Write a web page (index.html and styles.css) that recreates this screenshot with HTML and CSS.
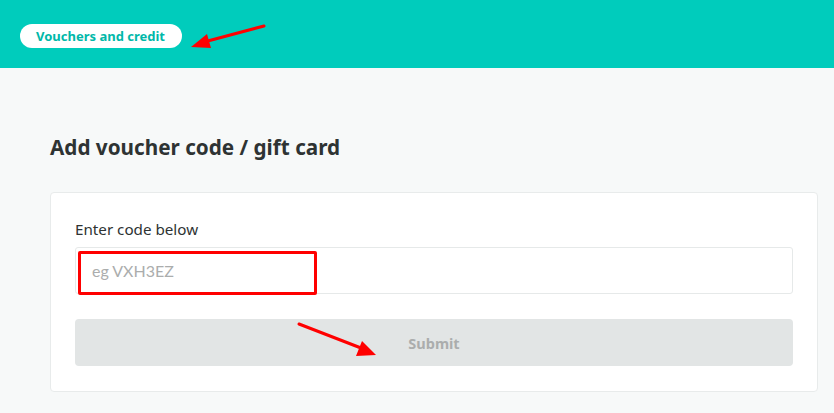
FILE: index.html
```html
<!DOCTYPE html>
<html lang="en">
<head>
    <meta charset="UTF-8">
    <meta name="viewport" content="width=device-width, initial-scale=1.0">
    <title>Vouchers and credit</title>
    <link rel="stylesheet" href="styles.css">
</head>
<body>
<header class="topbar">
    <span class="pill">Vouchers and credit</span>
    <!-- annotation arrow -->
    <svg class="arrow arrow-top" width="90" height="40" viewBox="0 0 90 40">
        <line x1="84" y1="6" x2="24" y2="22" stroke="#f00" stroke-width="3" stroke-linecap="round"/>
        <polygon points="11,27 27,14 31,28" fill="#f00"/>
    </svg>
</header>
<main class="content">
    <h1>Add voucher code / gift card</h1>
    <section class="card">
        <label for="code" class="field-label">Enter code below</label>
        <div class="input-wrap">
            <input type="text" id="code" placeholder="eg VXH3EZ">
            <span class="highlight"></span>
        </div>
        <div class="btn-wrap">
            <button type="button" class="submit-btn" disabled>Submit</button>
            <svg class="arrow arrow-btn" width="90" height="40" viewBox="0 0 90 40">
                <line x1="4" y1="4" x2="66" y2="28" stroke="#f00" stroke-width="3" stroke-linecap="round"/>
                <polygon points="81,35 61,36 67,21" fill="#f00"/>
            </svg>
        </div>
    </section>
</main>
</body>
</html>
```

FILE: styles.css
```css
body {
    margin: 0;
    font-family: 'Noto Sans', 'Open Sans', sans-serif;
    background-color: #f7f9f9;
    color: #2e3333;
}
.topbar {
    position: relative;
    height: 68px;
    background-color: #00ccbc;
    padding: 24px 0 0 20px;
    box-sizing: border-box;
}
.pill {
    display: inline-block;
    background: #fff;
    color: #00b8a9;
    font-size: 13px;
    font-weight: bold;
    line-height: 24px;
    height: 24px;
    padding: 0 17px 0 16px;
    border-radius: 12px;
}
.arrow {
    position: absolute;
    pointer-events: none;
}
.arrow-top {
    left: 180px;
    top: 20px;
}
.content {
    padding: 0 16px 0 50px;
}
h1 {
    margin: 0;
    padding: 64px 0 30px;
    font-size: 20.7px;
    line-height: 30px;
    font-weight: bold;
    color: #2e3333;
}
.card {
    background: #fff;
    border: 1px solid #e8ebeb;
    border-radius: 4px;
    padding: 24px 24px 25px;
}
.field-label {
    display: block;
    font-size: 15.2px;
    line-height: 24px;
    margin-bottom: 6px;
    color: #2e3333;
}
.input-wrap {
    position: relative;
}
.input-wrap input {
    display: block;
    width: 100%;
    box-sizing: border-box;
    height: 47px;
    border: 1px solid #e6e9e9;
    border-radius: 3px;
    padding: 0 16px;
    font-family: 'Lato', sans-serif;
    font-size: 16px;
    color: #2e3333;
    outline: none;
}
.input-wrap input::placeholder {
    color: #abadad;
}
.highlight {
    position: absolute;
    left: 3px;
    top: 4px;
    width: 233px;
    height: 38px;
    border: 3px solid #f00;
    border-radius: 2px;
    pointer-events: none;
}
.btn-wrap {
    position: relative;
    margin-top: 25px;
}
.submit-btn {
    display: block;
    width: 100%;
    height: 47px;
    border: none;
    border-radius: 4px;
    background-color: #e2e5e5;
    color: #abadad;
    font-family: 'Noto Sans', sans-serif;
    font-size: 14.5px;
    font-weight: bold;
}
.arrow-btn {
    left: 220px;
    top: 1px;
}
```
